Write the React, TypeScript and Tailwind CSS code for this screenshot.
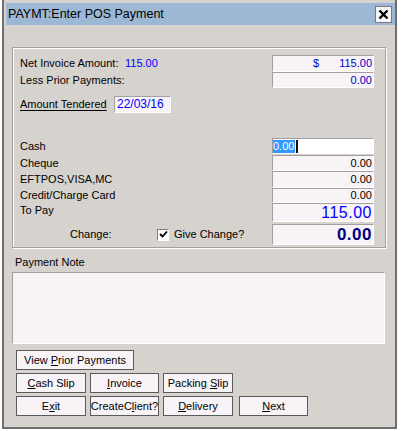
import type { ReactNode } from 'react'

function Field({ h, children, className = '' }: { h: string; children?: ReactNode; className?: string }) {
  return (
    <div
      className={`${h} w-[102px] flex items-center justify-end pr-[1px] border border-[#a0a0a0] border-r-white border-b-white bg-[#f7f3f7] ${className}`}
    >
      {children}
    </div>
  )
}

function Btn({ w, children }: { w: string; children: ReactNode }) {
  return (
    <div className={`${w} h-[20px] flex items-center justify-center border border-[#5a5a5a] bg-[#f7f3f7] text-black`}>
      {children}
    </div>
  )
}

export default function App() {
  return (
    <div className="w-[401px] h-[431px] bg-white overflow-hidden font-['Liberation_Sans',Arial,sans-serif] text-[11px] leading-[13px] text-black">
      <div className="ml-[2px] w-[395px] h-[429px] bg-[#d6d3ce] border-l-2 border-r-2 border-b-2 border-[#6e6e6e] flex flex-col">
        {/* title bar */}
        <div className="mt-[3px] ml-[2px] w-[389px] h-[22px] bg-[#9db8d5] flex items-center pl-[2px] pr-[3px]">
          <span className="text-[12.5px] leading-[16px]">PAYMT:Enter POS Payment</span>
          <div className="ml-auto w-[17px] h-[17px] mt-[1px] bg-[#f6f6f6] border border-[#7a7a7a] flex items-center justify-center">
            <svg width="11" height="11" viewBox="0 0 11 11">
              <path d="M1.5 1.5 L9.5 9.5 M9.5 1.5 L1.5 9.5" stroke="#000" strokeWidth="2.4" />
            </svg>
          </div>
        </div>

        {/* group box */}
        <div className="mt-[22px] ml-[8px] w-[374px] border border-[#a0a0a0] shadow-[inset_1px_1px_0_#fff,1px_1px_0_#fff] pt-[7px] pl-[7px] pb-[2px]">
          <div className="flex">
            <div className="w-[252px] flex flex-col">
              <div className="h-[17px] flex items-center">
                <span className="w-[105px]">Net Invoice Amount:</span>
                <span className="text-[#0000ff]">115.00</span>
              </div>
              <div className="h-[16px] flex items-center">Less Prior Payments:</div>
            </div>
            <div className="flex flex-col">
              <Field h="h-[17px]" className="text-[#0000cc]">
                <span className="mr-auto ml-[40px]">$</span>
                <span>115.00</span>
              </Field>
              <Field h="h-[16px]" className="text-[#0000cc]">0.00</Field>
            </div>
          </div>

          <div className="mt-[8px] h-[17px] flex items-center">
            <span className="w-[94px] underline underline-offset-[2px]">Amount Tendered</span>
            <div className="w-[57px] h-[17px] flex items-center pl-[2px] border border-[#a0a0a0] border-r-white border-b-white bg-[#f7f3f7] text-[#0000ff] text-[12px]">
              22/03/16
            </div>
          </div>

          <div className="mt-[25px] flex flex-col">
            <div className="h-[16px] flex items-center">
              <span className="w-[252px]">Cash</span>
              <div className="h-[16px] w-[102px] flex items-center border border-[#a0a0a0] border-r-white border-b-white bg-white">
                <span className="bg-[#3399ff] text-white pr-[1px]">0.00</span>
                <span className="ml-[1px] w-[2px] h-[13px] bg-[#1a1208]"></span>
              </div>
            </div>
            <div className="mt-[1px] h-[16px] flex items-center">
              <span className="w-[252px]">Cheque</span>
              <Field h="h-[16px]">0.00</Field>
            </div>
            <div className="h-[17px] flex items-center">
              <span className="w-[252px]">EFTPOS,VISA,MC</span>
              <Field h="h-[17px]">0.00</Field>
            </div>
            <div className="h-[15px] flex items-center">
              <span className="w-[252px]">Credit/Charge Card</span>
              <Field h="h-[15px]">0.00</Field>
            </div>
            <div className="h-[19px] flex">
              <span className="w-[252px] pt-[1px]">To Pay</span>
              <Field h="h-[19px]" className="text-[#0000ff] text-[16px] leading-[18px] tracking-[0.5px]">115.00</Field>
            </div>
            <div className="mt-[2px] h-[21px] flex items-center">
              <span className="ml-[50px] w-[87px]">Change:</span>
              <div className="w-[12px] h-[12px] border border-[#808080] border-r-white border-b-white bg-white flex items-center justify-center">
                <svg width="9" height="9" viewBox="0 0 9 9">
                  <path d="M1 4 L3.5 6.5 L8 1.5" stroke="#000" strokeWidth="1.8" fill="none" />
                </svg>
              </div>
              <span className="ml-[5px] w-[98px]">Give Change?</span>
              <Field h="h-[21px]" className="text-[#000080] text-[17px] leading-[19px] font-bold tracking-[0.5px]">0.00</Field>
            </div>
          </div>
        </div>

        {/* payment note */}
        <div className="mt-[8px] ml-[11px]">Payment Note</div>
        <div className="mt-[3px] ml-[8px] w-[373px] h-[72px] border border-[#a0a0a0] border-r-white border-b-white bg-[#f7f3f7]"></div>

        {/* buttons */}
        <div className="mt-[6px] ml-[12px] flex flex-col gap-[3px]">
          <Btn w="w-[118px]">
            <span>View <u>P</u>rior Payments</span>
          </Btn>
          <div className="flex gap-[4px]">
            <Btn w="w-[70px]">
              <span><u>C</u>ash Slip</span>
            </Btn>
            <Btn w="w-[69px]">
              <span><u>I</u>nvoice</span>
            </Btn>
            <Btn w="w-[70px]">
              <span>Packing <u>S</u>lip</span>
            </Btn>
          </div>
          <div className="flex gap-[4px]">
            <Btn w="w-[70px]">
              <span>E<u>x</u>it</span>
            </Btn>
            <Btn w="w-[69px]">
              <span>CreateC<u>l</u>ient?</span>
            </Btn>
            <Btn w="w-[70px]">
              <span><u>D</u>elivery</span>
            </Btn>
            <div className="ml-[2px]">
              <Btn w="w-[69px]">
                <span><u>N</u>ext</span>
              </Btn>
            </div>
          </div>
        </div>
      </div>
    </div>
  )
}
